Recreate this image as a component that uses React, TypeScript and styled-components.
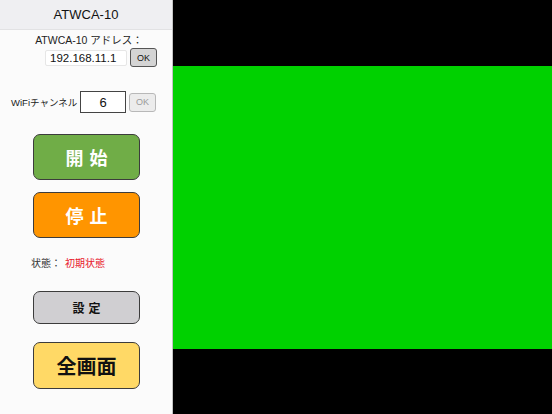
import React from "react";
import styled, { createGlobalStyle } from "styled-components";

const Global = createGlobalStyle`
  html, body {
    margin: 0;
    padding: 0;
    height: 100%;
  }
  body {
    font-family: "Liberation Sans", "Noto Sans CJK JP", sans-serif;
    background: #000;
  }
  #root {
    height: 100%;
  }
`;

const Page = styled.div`
  display: flex;
  width: 552px;
  height: 414px;
  overflow: hidden;
`;

const Sidebar = styled.div`
  width: 172px;
  flex-shrink: 0;
  background: #fbfbfb;
  border-right: 1px solid #c4c4c4;
  display: flex;
  flex-direction: column;
`;

const Header = styled.div`
  height: 30px;
  background: #efeff2;
  border-bottom: 1px solid #e2e2e4;
  display: flex;
  align-items: center;
  justify-content: center;
  font-size: 13px;
  color: #111;
  box-sizing: border-box;
`;

const Body = styled.div`
  display: flex;
  flex-direction: column;
  padding-top: 3px;
`;

const AddrLabel = styled.div`
  font-size: 10.5px;
  color: #222;
  text-align: center;
  padding-left: 6px;
  line-height: 14px;
`;

const Row = styled.div<{ $top?: number }>`
  display: flex;
  align-items: center;
  margin-top: ${(p) => p.$top ?? 0}px;
`;

const AddrInput = styled.input`
  width: 82px;
  height: 16px;
  box-sizing: border-box;
  margin-left: 45px;
  border: 1px solid #e6e6e6;
  border-radius: 2px;
  background: #fff;
  font-family: inherit;
  font-size: 11.5px;
  color: #111;
  padding: 0 4px;
  outline: none;
`;

const OkButton = styled.button<{ $disabled?: boolean }>`
  width: 27px;
  height: 19px;
  margin-left: 3px;
  box-sizing: border-box;
  border-radius: 3px;
  border: 1px solid ${(p) => (p.$disabled ? "#b8b8b8" : "#555")};
  background: ${(p) => (p.$disabled ? "#ececec" : "#d4d4d4")};
  color: ${(p) => (p.$disabled ? "#9a9a9a" : "#111")};
  font-family: inherit;
  font-size: 9px;
  padding: 0;
`;

const WifiLabel = styled.span`
  width: 80px;
  padding-left: 11px;
  box-sizing: border-box;
  font-size: 9.5px;
  white-space: nowrap;
  color: #222;
`;

const ChannelInput = styled.input`
  width: 46px;
  height: 22px;
  box-sizing: border-box;
  border: 1px solid #444;
  background: #fff;
  font-family: inherit;
  font-size: 13px;
  color: #111;
  text-align: center;
  padding: 0;
  outline: none;
`;

const ActionButton = styled.button<{
  $bg: string;
  $color: string;
  $height: number;
  $size: number;
  $top: number;
  $spacing?: number;
}>`
  width: 107px;
  height: ${(p) => p.$height}px;
  margin-left: 33px;
  margin-top: ${(p) => p.$top}px;
  box-sizing: border-box;
  border: 1px solid #3c3c3c;
  border-radius: 7px;
  background: ${(p) => p.$bg};
  color: ${(p) => p.$color};
  font-family: "Noto Sans CJK JP", sans-serif;
  font-weight: 700;
  font-size: ${(p) => p.$size}px;
  letter-spacing: ${(p) => p.$spacing ?? 0}px;
  text-indent: ${(p) => p.$spacing ?? 0}px;
  padding: 0;
  display: flex;
  align-items: center;
  justify-content: center;
`;

const Status = styled.div`
  margin-top: 18px;
  padding-left: 31px;
  font-size: 10px;
  font-family: "Noto Sans CJK JP", sans-serif;
  color: #333;
  line-height: 14px;
`;

const StatusValue = styled.span`
  color: #e8162a;
  margin-left: 4px;
`;

const Main = styled.div`
  flex: 1;
  background: #000;
  display: flex;
  align-items: center;
`;

const Video = styled.div`
  width: 100%;
  height: 283px;
  margin-top: 1px;
  background: #00d100;
`;

export default function App() {
  return (
    <>
      <Global />
      <Page>
        <Sidebar>
          <Header>ATWCA-10</Header>
          <Body>
            <AddrLabel>ATWCA-10 アドレス：</AddrLabel>
            <Row $top={1}>
              <AddrInput defaultValue="192.168.11.1" />
              <OkButton>OK</OkButton>
            </Row>
            <Row $top={24}>
              <WifiLabel>WiFiチャンネル</WifiLabel>
              <ChannelInput defaultValue="6" />
              <OkButton $disabled>OK</OkButton>
            </Row>
            <ActionButton $bg="#70ad47" $color="#fff" $height={46} $size={18} $top={21} $spacing={6}>
              開始
            </ActionButton>
            <ActionButton $bg="#ff9500" $color="#fff" $height={46} $size={18} $top={12} $spacing={6}>
              停止
            </ActionButton>
            <Status>
              状態：<StatusValue>初期状態</StatusValue>
            </Status>
            <ActionButton $bg="#d0cfd2" $color="#111" $height={33} $size={12} $top={21} $spacing={4}>
              設定
            </ActionButton>
            <ActionButton $bg="#ffd966" $color="#111" $height={47} $size={20} $top={18}>
              全画面
            </ActionButton>
          </Body>
        </Sidebar>
        <Main>
          <Video />
        </Main>
      </Page>
    </>
  );
}
